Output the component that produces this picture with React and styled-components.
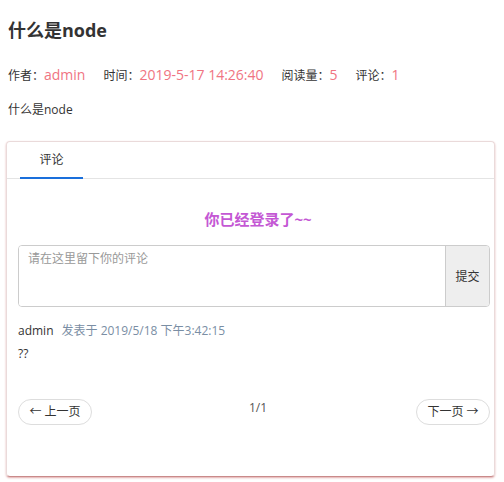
import React from "react";
import styled, { createGlobalStyle } from "styled-components";

const Global = createGlobalStyle`
  html, body { margin: 0; padding: 0; background: #fff; }
  body { font-family: "Open Sans", "Noto Sans CJK SC", sans-serif; color: #333; }
  * { box-sizing: border-box; }
`;

const Page = styled.div`
  width: 504px;
  padding: 0 9px 4px 6px;
`;

const Title = styled.h1`
  margin: 0;
  padding: 18px 0 0 2px;
  font-size: 18px;
  line-height: 24px;
  font-weight: 700;
  color: #333;
`;

const Meta = styled.div`
  display: flex;
  align-items: baseline;
  gap: 18px;
  margin-top: 22px;
  padding-left: 2px;
  font-size: 12px;
  color: #333;
  line-height: 22px;
`;

const MetaItem = styled.span`
  display: inline-flex;
  align-items: baseline;
`;

const MetaValue = styled.span`
  color: #f07482;
  font-size: 14px;
`;

const Body = styled.p`
  margin: 14px 0 0 2px;
  font-size: 12px;
  line-height: 18px;
  color: #333;
`;

const Card = styled.section`
  margin-top: 22px;
  height: 336px;
  border: 1px solid #eadada;
  border-bottom-color: #c98a8a;
  border-radius: 4px;
  box-shadow: 0 1px 2px rgba(190, 70, 70, 0.45);
  display: flex;
  flex-direction: column;
`;

const TabBar = styled.div`
  display: flex;
  border-bottom: 1px solid #e4e4e4;
  padding-left: 13px;
`;

const Tab = styled.div`
  width: 63px;
  text-align: center;
  font-size: 12px;
  line-height: 35px;
  color: #333;
  border-bottom: 2px solid ${(p) => (p.$active ? "#1a6fdb" : "transparent")};
  margin-bottom: -1px;
`;

const Content = styled.div`
  padding: 0 4px 0 11px;
  display: flex;
  flex-direction: column;
`;

const Notice = styled.div`
  text-align: center;
  margin-top: 30px;
  font-size: 15px;
  font-weight: 700;
  line-height: 20px;
  color: #c458d4;
  padding-left: 8px;
`;

const InputGroup = styled.div`
  display: flex;
  margin-top: 16px;
  height: 62px;
  border: 1px solid #ccc;
  border-radius: 4px;
  overflow: hidden;
`;

const TextArea = styled.textarea`
  flex: 1;
  border: none;
  resize: none;
  outline: none;
  padding: 5px 9px;
  font-family: "Open Sans", "Noto Sans CJK SC", sans-serif;
  font-size: 12px;
  line-height: 16px;
  color: #333;
  &::placeholder { color: #999; }
`;

const Submit = styled.button`
  width: 44px;
  border: none;
  border-left: 1px solid #ccc;
  background: #eee;
  font-family: "Open Sans", "Noto Sans CJK SC", sans-serif;
  font-size: 12px;
  color: #333;
  padding: 0;
`;

const CommentHead = styled.div`
  display: flex;
  align-items: baseline;
  gap: 8px;
  margin-top: 15px;
  font-size: 12px;
  line-height: 18px;
`;

const Author = styled.span`
  color: #333;
`;

const Time = styled.span`
  color: #7a8ea4;
`;

const CommentText = styled.div`
  margin-top: 5px;
  font-size: 12px;
  line-height: 18px;
  color: #333;
`;

const Pager = styled.div`
  display: flex;
  justify-content: space-between;
  align-items: flex-start;
  margin-top: 36px;
`;

const PageBtn = styled.button`
  height: 26px;
  padding: 0 10px;
  border: 1px solid #ddd;
  border-radius: 13px;
  background: #fff;
  font-family: "Open Sans", "Noto Sans CJK SC", sans-serif;
  font-size: 12px;
  color: #333;
  line-height: 24px;
  width: ${(p) => p.$w}px;
`;

const PageInfo = styled.span`
  font-size: 12px;
  line-height: 16px;
  color: #555;
  margin-top: 1px;
  padding-left: 8px;
`;

export default function App() {
  return (
    <Page>
      <Global />
      <Title>什么是node</Title>
      <Meta>
        <MetaItem>作者：<MetaValue>admin</MetaValue></MetaItem>
        <MetaItem>时间：<MetaValue>2019-5-17 14:26:40</MetaValue></MetaItem>
        <MetaItem>阅读量：<MetaValue>5</MetaValue></MetaItem>
        <MetaItem>评论：<MetaValue>1</MetaValue></MetaItem>
      </Meta>
      <Body>什么是node</Body>
      <Card>
        <TabBar>
          <Tab $active>评论</Tab>
        </TabBar>
        <Content>
          <Notice>你已经登录了~~</Notice>
          <InputGroup>
            <TextArea placeholder="请在这里留下你的评论" />
            <Submit>提交</Submit>
          </InputGroup>
          <CommentHead>
            <Author>admin</Author>
            <Time>发表于 2019/5/18 下午3:42:15</Time>
          </CommentHead>
          <CommentText>??</CommentText>
          <Pager>
            <PageBtn $w={74}>← 上一页</PageBtn>
            <PageInfo>1/1</PageInfo>
            <PageBtn $w={74}>下一页 →</PageBtn>
          </Pager>
        </Content>
      </Card>
    </Page>
  );
}
